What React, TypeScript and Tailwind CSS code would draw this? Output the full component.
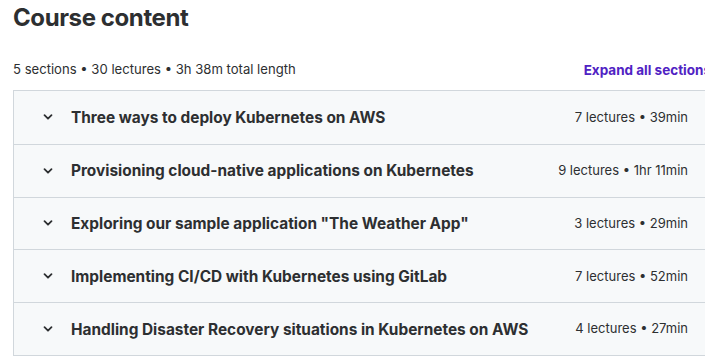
import React from "react";

const sections = [
  { title: "Three ways to deploy Kubernetes on AWS", meta: "7 lectures • 39min" },
  { title: "Provisioning cloud-native applications on Kubernetes", meta: "9 lectures • 1hr 11min" },
  { title: 'Exploring our sample application "The Weather App"', meta: "3 lectures • 29min" },
  { title: "Implementing CI/CD with Kubernetes using GitLab", meta: "7 lectures • 52min" },
  { title: "Handling Disaster Recovery situations in Kubernetes on AWS", meta: "4 lectures • 27min" },
];

function Chevron() {
  return (
    <svg width="12" height="12" viewBox="0 0 12 12" fill="none" className="shrink-0">
      <path d="M2.5 4.2 L6 7.7 L9.5 4.2" stroke="#2d2f31" strokeWidth="1.8" strokeLinecap="round" strokeLinejoin="round" />
    </svg>
  );
}

export default function App() {
  return (
    <div className="w-[705px] h-[356px] overflow-hidden bg-white" style={{ fontFamily: "Inter, 'Noto Sans', sans-serif" }}>
      <div className="w-[700px] ml-[13px]">
        <h2 className="text-[24px] leading-[36px] font-bold text-[#2d2f31] tracking-[-0.4px]">Course content</h2>
        <div className="flex items-center justify-between mt-[15px] h-[38px]">
          <span className="text-[13.1px] text-[#2d2f31]">5 sections • 30 lectures • 3h 38m total length</span>
          <span className="text-[13.5px] font-bold text-[#5022c3] mr-[2px] whitespace-nowrap">Expand all sections</span>
        </div>
        <div className="mt-[1px] border border-[#d1d7dc]">
          {sections.map((s, i) => (
            <div
              key={i}
              className={`flex items-center h-[52.8px] bg-[#f7f9fa] pl-[28px] pr-[24px] ${i > 0 ? "border-t border-[#d1d7dc]" : ""}`}
            >
              <Chevron />
              <span className="ml-[17px] text-[15.4px] font-bold text-[#2d2f31] flex-1 whitespace-nowrap">{s.title}</span>
              <span className="text-[13px] text-[#2d2f31] whitespace-nowrap">{s.meta}</span>
            </div>
          ))}
        </div>
      </div>
    </div>
  );
}
